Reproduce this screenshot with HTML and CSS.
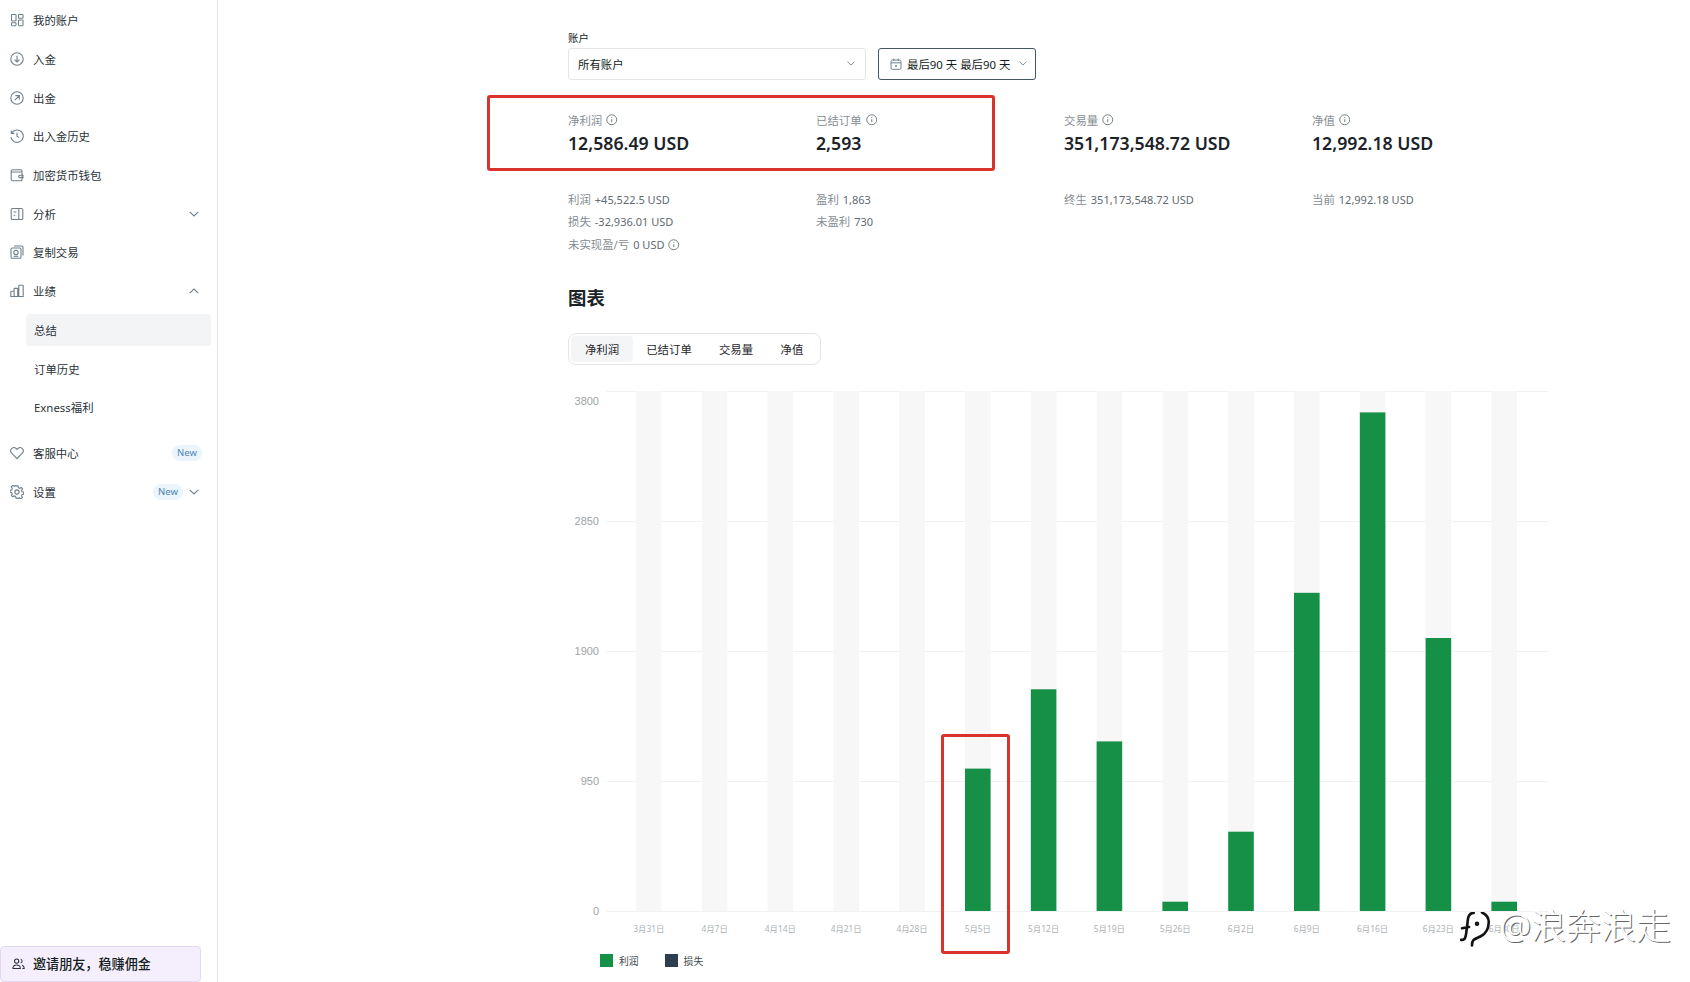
FILE: index.html
```html
<!DOCTYPE html>
<html lang="zh-CN">
<head>
  <meta charset="UTF-8">
  <title>业绩总结</title>
  <link rel="stylesheet" href="styles.css">
</head>
<body>

<aside class="sidebar">
  <nav class="nav">
    <a class="nav-item">
      <svg class="nav-icon" viewBox="0 0 14 14"><rect x="1.5" y="1.5" width="4.5" height="6.5" rx=".6"/><rect x="8.5" y="1.5" width="4.5" height="3.8" rx=".6"/><rect x="1.5" y="9.7" width="4.5" height="3" rx=".6"/><rect x="8.5" y="7" width="4.5" height="5.7" rx=".6"/></svg>
      <span>我的账户</span>
    </a>
    <a class="nav-item">
      <svg class="nav-icon" viewBox="0 0 14 14"><circle cx="7" cy="7" r="6.2"/><path d="M7 3.8v6M4.6 7.6 7 10l2.4-2.4"/></svg>
      <span>入金</span>
    </a>
    <a class="nav-item">
      <svg class="nav-icon" viewBox="0 0 14 14"><circle cx="7" cy="7" r="6.2"/><path d="M4.8 9.2 9.2 4.8M5.4 4.6h3.9v3.9"/></svg>
      <span>出金</span>
    </a>
    <a class="nav-item">
      <svg class="nav-icon" viewBox="0 0 14 14"><path d="M1.6 4.2A6.2 6.2 0 1 1 .9 8"/><path d="M1.3 1.4v3h3M7 3.8v3.4l2.2 1.4"/></svg>
      <span>出入金历史</span>
    </a>
    <a class="nav-item">
      <svg class="nav-icon" viewBox="0 0 14 14"><path d="M12 4V3a1.3 1.3 0 0 0-1.300-1.300H3A1.800 1.800 0 0 0 1.200 3.500v7.700A1.600 1.600 0 0 0 2.800 12.800h8A1.300 1.300 0 0 0 12.100 11.500V5.300A1.300 1.300 0 0 0 10.800 4H1.500"/><path d="M13 7.200H9.800a1.200 1.200 0 0 0 0 2.400H13z"/></svg>
      <span>加密货币钱包</span>
    </a>
    <a class="nav-item">
      <svg class="nav-icon" viewBox="0 0 14 14"><rect x="1.200" y="1.500" width="11.600" height="11" rx="1.300"/><path d="M8.800 1.500v11M3.600 5h2.800M3.600 8.200h1.600"/></svg>
      <span>分析</span>
      <svg class="chevron" viewBox="0 0 10 6"><path d="M.7.8 5 5 9.300.8"/></svg>
    </a>
    <a class="nav-item">
      <svg class="nav-icon" viewBox="0 0 14 14"><rect x="1" y="3" width="10" height="10.300" rx="1.300"/><path d="M4 1h7.500A1.500 1.500 0 0 1 13 2.500v8"/><rect x="3.800" y="5.400" width="4.400" height="4.200" rx="2"/><path d="M3.600 11.300h4.800"/></svg>
      <span>复制交易</span>
    </a>
    <a class="nav-item">
      <svg class="nav-icon" viewBox="0 0 14 14"><path d="M.8 12.500V7.800a.6.6 0 0 1 .6-.6h2.700v5.300zM4.100 12.500V5a.6.6 0 0 1 .6-.6h3v8.100zM8.800 12.500V1.800a.6.6 0 0 1 .6-.6h3.200a.6.6 0 0 1 .6.600v10.700z"/></svg>
      <span>业绩</span>
      <svg class="chevron" viewBox="0 0 10 6"><path d="M.7 5.200 5 1l4.300 4.200"/></svg>
    </a>
    <a class="nav-sub active"><span>总结</span></a>
    <a class="nav-sub"><span>订单历史</span></a>
    <a class="nav-sub"><span>Exness福利</span></a>
    <a class="nav-item nav-gap badge-end">
      <svg class="nav-icon" viewBox="0 0 14 14"><path d="M7 12.600 1.700 7.200a3.300 3.300 0 0 1 0-4.600 3.200 3.200 0 0 1 4.500 0l.8.8.8-.8a3.200 3.200 0 0 1 4.500 0 3.300 3.300 0 0 1 0 4.600z"/></svg>
      <span>客服中心</span>
      <span class="badge">New</span>
    </a>
    <a class="nav-item">
      <svg class="nav-icon" viewBox="0 0 14 14"><circle cx="7" cy="7" r="2.100"/><path d="M6 .9h2l.4 1.800 1.300.6 1.600-.9 1.300 1.500-1 1.500.4 1.300 1.700.5v2l-1.700.4-.5 1.300.9 1.500-1.400 1.400-1.500-.9-1.300.5L8 13.100H6l-.4-1.700-1.300-.5-1.500.9-1.400-1.400.9-1.500-.5-1.300-1.700-.4v-2l1.700-.5.5-1.300-1-1.500 1.400-1.500 1.500.9 1.300-.6z"/></svg>
      <span>设置</span>
      <span class="badge">New</span>
      <svg class="chevron chevron-tight" viewBox="0 0 10 6"><path d="M.7.8 5 5 9.300.8"/></svg>
    </a>
  </nav>
  <div class="invite">
    <svg class="invite-icon" viewBox="0 0 14 14"><circle cx="5" cy="4.400" r="2.300"/><path d="M1 12.300c0-2.300 1.600-3.600 4-3.600s4 1.300 4 3.600zM9.300 2.300a2.200 2.200 0 0 1 0 4.200M10.800 8.900c1.500.4 2.400 1.500 2.400 3.400h-2"/></svg>
    <span>邀请朋友，稳赚佣金</span>
  </div>
</aside>

<main class="main">
  <div class="field-label">账户</div>
  <div class="filters">
    <div class="select">
      <span>所有账户</span>
      <svg class="chevron chevron-small" viewBox="0 0 10 6"><path d="M.7.8 5 5 9.300.8"/></svg>
    </div>
    <div class="date-btn">
      <svg class="calendar" viewBox="0 0 12 12"><rect x="1" y="2" width="10" height="9.300" rx="1.500"/><path d="M1 4.800h10M3.800.6v2.400M8.200.6v2.400M5 8h2M6 7v2"/></svg>
      <span>最后90 天 最后90 天</span>
      <svg class="chevron chevron-small" viewBox="0 0 10 6"><path d="M.7.8 5 5 9.300.8"/></svg>
    </div>
  </div>

  <section class="stats">
    <div class="stat">
      <div class="stat-label">净利润 <svg class="info" viewBox="0 0 12 12"><circle cx="6" cy="6" r="5.200"/><path d="M6 5.400v3M6 3.300v.9"/></svg></div>
      <div class="stat-value">12,586.49 USD</div>
      <ul class="stat-details">
        <li><span>利润</span> +45,522.5 USD</li>
        <li><span>损失</span> -32,936.01 USD</li>
        <li><span>未实现盈/亏</span> 0 USD <svg class="info" viewBox="0 0 12 12"><circle cx="6" cy="6" r="5.200"/><path d="M6 5.400v3M6 3.300v.9"/></svg></li>
      </ul>
    </div>
    <div class="stat">
      <div class="stat-label">已结订单 <svg class="info" viewBox="0 0 12 12"><circle cx="6" cy="6" r="5.200"/><path d="M6 5.400v3M6 3.300v.9"/></svg></div>
      <div class="stat-value">2,593</div>
      <ul class="stat-details">
        <li><span>盈利</span> 1,863</li>
        <li><span>未盈利</span> 730</li>
      </ul>
    </div>
    <div class="stat">
      <div class="stat-label">交易量 <svg class="info" viewBox="0 0 12 12"><circle cx="6" cy="6" r="5.200"/><path d="M6 5.400v3M6 3.300v.9"/></svg></div>
      <div class="stat-value">351,173,548.72 USD</div>
      <ul class="stat-details">
        <li><span>终生</span> 351,173,548.72 USD</li>
      </ul>
    </div>
    <div class="stat">
      <div class="stat-label">净值 <svg class="info" viewBox="0 0 12 12"><circle cx="6" cy="6" r="5.200"/><path d="M6 5.400v3M6 3.300v.9"/></svg></div>
      <div class="stat-value">12,992.18 USD</div>
      <ul class="stat-details">
        <li><span>当前</span> 12,992.18 USD</li>
      </ul>
    </div>
  </section>

  <h2 class="chart-title">图表</h2>

  <div class="tabs">
    <button class="tab tab-active">净利润</button>
    <button class="tab">已结订单</button>
    <button class="tab">交易量</button>
    <button class="tab">净值</button>
  </div>

  <svg class="chart" viewBox="568 381 1000 560">
    <g class="grid">
      <path d="M606 391.500H1548M606 521.500H1548M606 651.500H1548M606 781.500H1548M606 911.500H1548"/>
    </g>
    <g class="bands">
      <rect x="636" y="391" width="25.600" height="520"/>
      <rect x="701.800" y="391" width="25.600" height="520"/>
      <rect x="767.600" y="391" width="25.600" height="520"/>
      <rect x="833.400" y="391" width="25.600" height="520"/>
      <rect x="899.200" y="391" width="25.600" height="520"/>
      <rect x="965" y="391" width="25.600" height="520"/>
      <rect x="1030.800" y="391" width="25.600" height="520"/>
      <rect x="1096.600" y="391" width="25.600" height="520"/>
      <rect x="1162.400" y="391" width="25.600" height="520"/>
      <rect x="1228.200" y="391" width="25.600" height="520"/>
      <rect x="1294" y="391" width="25.600" height="520"/>
      <rect x="1359.800" y="391" width="25.600" height="520"/>
      <rect x="1425.600" y="391" width="25.600" height="520"/>
      <rect x="1491.400" y="391" width="25.600" height="520"/>
    </g>
    <g class="bars">
      <rect x="965" y="768.600" width="25.600" height="142.400"/>
      <rect x="1030.800" y="689.300" width="25.600" height="221.700"/>
      <rect x="1096.600" y="741.400" width="25.600" height="169.600"/>
      <rect x="1162.400" y="901.700" width="25.600" height="9.300"/>
      <rect x="1228.200" y="831.700" width="25.600" height="79.300"/>
      <rect x="1294" y="592.800" width="25.600" height="318.200"/>
      <rect x="1359.800" y="412.400" width="25.600" height="498.600"/>
      <rect x="1425.600" y="638" width="25.600" height="273"/>
      <rect x="1491.400" y="901.700" width="25.600" height="9.300"/>
    </g>
    <g class="y-axis">
      <text x="599" y="405">3800</text>
      <text x="599" y="525">2850</text>
      <text x="599" y="655">1900</text>
      <text x="599" y="785">950</text>
      <text x="599" y="915">0</text>
    </g>
    <g class="x-axis">
      <text x="648.800" y="932">3月31日</text>
      <text x="714.600" y="932">4月7日</text>
      <text x="780.400" y="932">4月14日</text>
      <text x="846.200" y="932">4月21日</text>
      <text x="912" y="932">4月28日</text>
      <text x="977.800" y="932">5月5日</text>
      <text x="1043.600" y="932">5月12日</text>
      <text x="1109.400" y="932">5月19日</text>
      <text x="1175.200" y="932">5月26日</text>
      <text x="1241" y="932">6月2日</text>
      <text x="1306.800" y="932">6月9日</text>
      <text x="1372.600" y="932">6月16日</text>
      <text x="1438.400" y="932">6月23日</text>
      <text x="1504.200" y="932">6月30日</text>
    </g>
  </svg>

  <div class="legend">
    <div class="legend-item"><i class="swatch swatch-profit"></i>利润</div>
    <div class="legend-item"><i class="swatch swatch-loss"></i>损失</div>
  </div>

  <div class="mark mark-stats"></div>
  <div class="mark mark-bar"></div>
</main>

<div class="watermark">
  <svg class="watermark-logo" viewBox="-2 0 30 35"><path d="M11.700.9C8.500 1 6.700 3 6 6.500L4.600 18c-.5 5-1.200 8-2.200 9-.8.8-2 1-3.400.9M0 16.300l7-1.300"/><path d="M20 .5c4.500 2 7 5.500 6.700 10.500-.3 6-3 10.500-7.500 13-3 1.700-6 2.500-7.700 4-1 1-1.500 3-1.500 5.500"/><circle cx="15" cy="11.700" r="1"/></svg>
  <span class="watermark-text">@浪奔浪走</span>
</div>

</body>
</html>
```

FILE: styles.css
```css
* {
  box-sizing: border-box;
}

body {
  margin: 0;
  height: 982px;
  overflow: hidden;
  display: flex;
  background: #fff;
  color: #141d22;
  font-family: "Noto Sans", "Noto Sans CJK SC", sans-serif;
  font-size: 11.4px;
}

/* sidebar */
.sidebar {
  width: 218px;
  height: 982px;
  flex-shrink: 0;
  border-right: 1px solid #e4e6e8;
  display: flex;
  flex-direction: column;
  justify-content: space-between;
}

.nav {
  padding-top: 1px;
  display: flex;
  flex-direction: column;
}

.nav-item {
  height: 38.7px;
  padding: 0 18px 0 10px;
  display: flex;
  align-items: center;
  gap: 9px;
  color: #2a3238;
}

.nav-gap {
  margin-top: 7.5px;
}

.badge-end {
  padding-right: 15px;
}

.nav-icon {
  width: 14px;
  height: 14px;
  flex-shrink: 0;
  fill: none;
  stroke: #6f808b;
  stroke-width: 1.100;
}

.chevron {
  width: 10px;
  height: 6px;
  margin-left: auto;
  flex-shrink: 0;
  fill: none;
  stroke: #6f808b;
  stroke-width: 1.100;
}

.chevron-tight {
  margin-left: -3px;
}

.chevron-small {
  width: 8px;
  height: 5px;
}

.nav-sub {
  height: 32px;
  margin: 3.35px 6px 3.35px 26px;
  padding-left: 8px;
  display: flex;
  align-items: center;
  border-radius: 4px;
  color: #2a3238;
}

.nav-sub.active {
  background: #f3f4f6;
}

.badge {
  margin-left: auto;
  width: 30px;
  height: 16px;
  border-radius: 8px;
  background: #ecf4fb;
  color: #4a86b4;
  font-size: 9.5px;
  line-height: 16px;
  text-align: center;
}

.invite {
  width: 201px;
  height: 36px;
  padding: 0 0 2px 11px;
  display: flex;
  align-items: center;
  gap: 8px;
  background: #f5effd;
  border: 1px solid #e3d8ef;
  border-radius: 4px;
  font-size: 13.100px;
  font-weight: 500;
}

.invite-icon {
  width: 13px;
  height: 13px;
  fill: none;
  stroke: #2a3238;
  stroke-width: 1.100;
}

/* main column */
.main {
  flex: 1;
  padding: 31px 0 0 350px;
}

.field-label {
  height: 14px;
  margin-bottom: 2.5px;
  font-size: 10.4px;
  line-height: 14px;
}

.filters {
  display: flex;
  gap: 12px;
}

.select {
  width: 298px;
  height: 32px;
  padding: 0 10px 0 9px;
  display: flex;
  align-items: center;
  background: #fff;
  border: 1px solid #e3e5e7;
  border-radius: 3px;
}

.date-btn {
  width: 158px;
  height: 32px;
  padding: 0 8px 0 11px;
  display: flex;
  align-items: center;
  gap: 5px;
  border: 1px solid #43565f;
  border-radius: 3px;
  white-space: nowrap;
}

.calendar {
  width: 12px;
  height: 12px;
  flex-shrink: 0;
  fill: none;
  stroke: #6f808b;
  stroke-width: 1;
}

.stats {
  margin-top: 32.1px;
  display: grid;
  grid-template-columns: repeat(4, 248px);
}

.stat-label {
  height: 17px;
  display: flex;
  align-items: center;
  gap: 4px;
  color: #868e94;
  line-height: 17px;
}

.info {
  width: 11.5px;
  height: 11.5px;
  flex-shrink: 0;
  fill: none;
  stroke: #6f7a80;
  stroke-width: 1;
}

.stat-value {
  margin-top: 1px;
  height: 26px;
  font-size: 17.7px;
  font-weight: 600;
  line-height: 26px;
  color: #1b2329;
  white-space: nowrap;
}

.stat-details {
  list-style: none;
  margin: 33px 0 0;
  padding: 0;
  color: #5f6a71;
  font-size: 11px;
}

.stat-details li {
  height: 22.6px;
  display: flex;
  align-items: center;
  gap: 4px;
  line-height: 22.6px;
}

.stat-details span {
  color: #858d92;
  font-size: 11.4px;
}

.chart-title {
  margin: 28.6px 0 0;
  height: 26px;
  font-size: 18.4px;
  font-weight: 700;
  line-height: 26px;
  color: #1b2329;
}

.tabs {
  margin-top: 22px;
  width: 253px;
  height: 32px;
  padding: 2px;
  display: flex;
  border: 1px solid #e3e5e7;
  border-radius: 8px;
}

.tab {
  height: 26px;
  padding: 0;
  border: 0;
  border-radius: 4px;
  background: none;
  color: #1f272c;
  font: inherit;
  width: 66px;
}

.tab:nth-child(1) {
  width: 62px;
}

.tab:nth-child(2) {
  width: 72px;
}

.tab:nth-child(3) {
  width: 62px;
}

.tab:nth-child(4) {
  width: 50px;
}

.tab-active {
  background: #f3f5f7;
}

/* chart */
.chart {
  display: block;
  margin-top: 16px;
  width: 1000px;
  height: 560px;
}

.grid path {
  fill: none;
  stroke: #f1f2f2;
  stroke-width: 1;
}

.bands rect {
  fill: #f7f7f7;
}

.bars rect {
  fill: #168f47;
}

.y-axis text {
  fill: #9ea3a6;
  font-family: "Liberation Sans", sans-serif;
  font-size: 11px;
  text-anchor: end;
}

.x-axis text {
  fill: #adb1b3;
  font-size: 8.4px;
  text-anchor: middle;
}

.legend {
  margin: 13px 0 0 32px;
  display: flex;
  gap: 26px;
  font-size: 9.800px;
  color: #3d464c;
}

.legend-item {
  display: flex;
  align-items: center;
  gap: 6px;
}

.swatch {
  width: 13px;
  height: 13px;
}

.swatch-profit {
  background: #168f47;
}

.swatch-loss {
  background: #2c3e50;
}

/* red annotation boxes drawn over the screenshot */
.mark {
  position: absolute;
  border: 3px solid #d9332a;
  border-radius: 3px;
}

.mark-stats {
  left: 487px;
  top: 95px;
  width: 508px;
  height: 76px;
}

.mark-bar {
  left: 941px;
  top: 734px;
  width: 69px;
  height: 220px;
}

/* watermark */
.watermark {
  position: absolute;
  left: 1460px;
  top: 904px;
  display: flex;
  align-items: center;
  gap: 10px;
}

.watermark-logo {
  width: 30px;
  height: 35px;
  margin-top: 8px;
  fill: none;
  stroke: #111;
  stroke-width: 2.600;
  stroke-linecap: round;
}

.watermark-text {
  color: #fff;
  font-size: 35px;
  font-weight: 300;
  line-height: 40px;
  text-shadow: 1px 1px 0 #666;
}
```
